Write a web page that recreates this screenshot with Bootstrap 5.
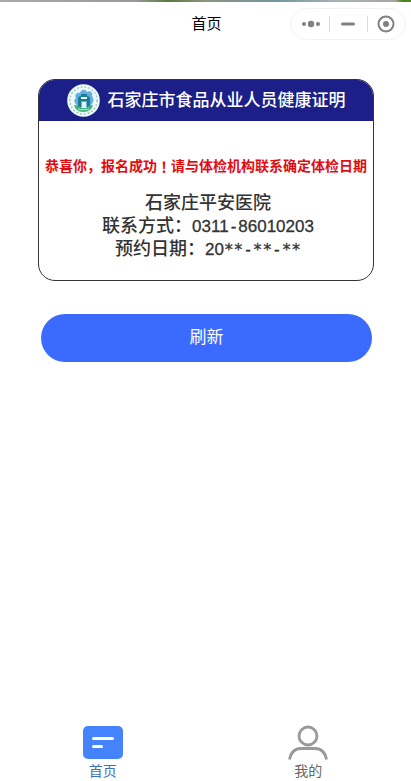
<!DOCTYPE html>
<html lang="zh-CN">
<head>
<meta charset="utf-8">
<meta name="viewport" content="width=device-width, initial-scale=1">
<title>首页</title>
<link href="https://cdn.jsdelivr.net/npm/bootstrap@5.3.0/dist/css/bootstrap.min.css" rel="stylesheet">
<style>
  body { font-family: "Liberation Sans", "Noto Sans CJK SC", sans-serif; background: #fff; color: #000; }
  .top-strip { height: 2px; background: linear-gradient(90deg, #aaa 0%, #999 33%, #5d7a42 41%, #8d9580 50%, #7397a0 68%, #a9b5b8 82%, #a5a5a5 96%, #4c8518 98%); }
  .app-bar { display: grid; grid-template-columns: 1fr auto 1fr; height: 44px; padding-right: 5px; }
  .app-title { font-size: 15px; line-height: 20px; padding-left: 7px; font-weight: 400; }
  .capsule { width: 116px; height: 32px; padding: 0 1px 0 2px; border: 1px solid #f3f3f3; border-radius: 16px; color: #808080; }
  .capsule button { flex: 1; height: 16px; border: 0; padding: 0; background: none; color: inherit; display: flex; align-items: center; justify-content: center; }
  .capsule button + button { border-left: 1px solid #dcdcdc; }
  .page-body { padding: 33px 37px 0 38px; }
  .cert { border: 1px solid #343438; border-radius: 17px; overflow: hidden; }
  .cert-head { height: 41px; background: #1b1f87; color: #fff; gap: 8px; }
  .cert-head h2 { font-size: 17px; line-height: 24px; font-weight: 500; }
  .cert-body { padding: 34px 0 19px; }
  .notice { color: #e00c10; font-size: 14px; line-height: 22px; font-weight: 700; margin-bottom: 15px; white-space: nowrap; }
  .centered-mark { font-family: "Noto Sans CJK JP", sans-serif; }
  .detail { color: #333; font-size: 18px; line-height: 23px; height: 23px; padding-left: 4px; font-weight: 500; }
  .digits { font-size: 17px; line-height: 1; -webkit-text-stroke: .3px; }
  .fixed-cell { font-family: "DejaVu Sans Mono", monospace; font-size: 16px; line-height: 1; }
  .refresh { margin: 33px 2px 0 3px; height: 48px; background: #3b6aff; color: #fff; font-size: 17px; line-height: 24px; }
  .tabs a { flex: 1; font-size: 14px; line-height: 20px; color: #666; text-decoration: none; }
  .tabs a.current { color: #3f6fbd; }
</style>
<script src="https://cdn.jsdelivr.net/npm/bootstrap@5.3.0/dist/js/bootstrap.bundle.min.js"></script>
</head>
<body class="d-flex flex-column min-vh-100">
<div class="top-strip"></div>
<header class="app-bar align-items-center">
  <span></span>
  <h1 class="app-title mb-0">首页</h1>
  <div class="capsule d-flex align-items-center ms-auto">
    <button type="button" aria-label="更多"><svg width="20" height="8" viewBox="0 0 20 8" fill="currentColor"><circle cx="3" cy="4" r="2"/><circle cx="10" cy="4" r="3.2"/><circle cx="17" cy="4" r="2"/></svg></button>
    <button type="button" aria-label="最小化"><svg width="14" height="4" viewBox="0 0 14 4"><rect y=".5" width="14" height="3" rx="1.5" fill="currentColor"/></svg></button>
    <button type="button" aria-label="关闭"><svg width="18" height="18" viewBox="0 0 18 18"><circle cx="9" cy="9" r="7.5" fill="none" stroke="currentColor" stroke-width="2"/><circle cx="9" cy="9" r="3" fill="currentColor"/></svg></button>
  </div>
</header>

<main class="page-body flex-grow-1">
  <section class="cert">
    <div class="cert-head d-flex align-items-center justify-content-center">
      <svg width="33" height="33" viewBox="0 0 33 33" aria-hidden="true">
        <circle cx="16.5" cy="16.5" r="16.300" fill="#eef8f6"/>
        <circle cx="16.5" cy="16.5" r="13.600" fill="none" stroke="#9ccabd" stroke-width="1.500" stroke-dasharray="1.8 2"/>
        <path d="M8 19c-1-2-1-4 1-5-2-3 1-6 4-5 1-4 6-4 7-1 4-2 6 1 5 4 2 2 2 5 0 8l-3 3H11z" fill="#62b0e2"/>
        <path d="M11 24V13l3-1v-2h6v2l3 1v11h-3v-7h-6v7z" fill="#1c7d92"/>
        <path d="M14 13h6v2h-6zM15 18h4v5h-4z" fill="#e2f5f4"/>
        <path d="M7 21c3 0 5 1 7 3h5c2-2 4-3 7-3-1 4-4 7-9.500 7S8 25 7 21z" fill="#42b07c"/>
        <path d="M11 25c4 1 7 1 11 0" fill="none" stroke="#d9f2df" stroke-width=".8"/>
      </svg>
      <h2 class="mb-0">石家庄市食品从业人员健康证明</h2>
    </div>
    <div class="cert-body text-center">
      <p class="notice d-flex justify-content-center">恭喜你，报名成功<span class="centered-mark" lang="ja">！</span>请与体检机构联系确定体检日期</p>
      <div class="detail">石家庄平安医院</div>
      <div class="detail">联系方式：<span class="digits">0311<span class="fixed-cell">-</span>86010203</span></div>
      <div class="detail">预约日期：<span class="digits">20<span class="fixed-cell">**-**-**</span></span></div>
    </div>
  </section>
  <div class="d-flex">
    <button type="button" class="refresh btn rounded-pill flex-grow-1 border-0 p-0">刷新</button>
  </div>
</main>

<nav class="tabs d-flex" aria-label="主导航">
  <a href="#home" class="current d-flex flex-column align-items-center" aria-current="page">
    <svg width="40" height="36" viewBox="0 0 40 36"><rect y="1" width="40" height="33" rx="5" fill="#4583fc"/><path d="M10.500 13.500h19M10.500 21.500h8" stroke="#fff" stroke-width="3" stroke-linecap="round"/></svg>
    <span>首页</span>
  </a>
  <a href="#mine" class="d-flex flex-column align-items-center">
    <svg width="40" height="36" viewBox="0 0 40 36" fill="none" stroke="#999" stroke-width="2.800"><circle cx="20" cy="11" r="9"/><path d="M1.500 34.500C3 27 7 23.500 13 23.500h14c6 0 10 3.500 11.500 11"/></svg>
    <span>我的</span>
  </a>
</nav>
</body>
</html>
